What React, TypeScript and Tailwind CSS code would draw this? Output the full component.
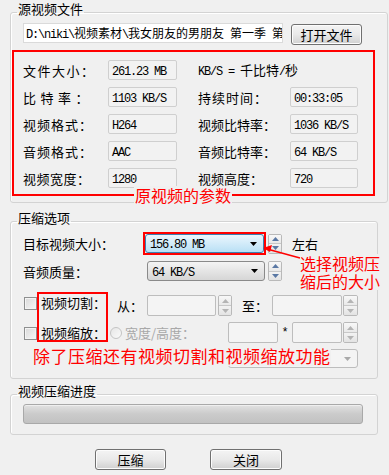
import React from "react";

// Win7-style "video compress" dialog with red hand-drawn annotations on top.

const CJK_RE = /[\u3000-\u9fff\uff00-\uffef]/;

// SimSun look: latin half width, CJK full width
function Mixed({ text, cjk = "text-[12px]" }: { text: string; cjk?: string }) {
  const parts = text.match(/[\u3000-\u9fff\uff00-\uffef]+|[^\u3000-\u9fff\uff00-\uffef]+/g) ?? [];
  return (
    <span className="whitespace-pre">
      {parts.map((p, i) =>
        CJK_RE.test(p) ? (
          <span key={i} className={"font-['Noto_Sans_CJK_SC',sans-serif] " + cjk}>
            {p}
          </span>
        ) : (
          <span key={i} className="font-['Liberation_Mono',monospace] text-[12px] tracking-[-1.2px]">
            {p}
          </span>
        )
      )}
    </span>
  );
}

function Group({
  title,
  className,
  children,
}: {
  title: string;
  className?: string;
  children?: React.ReactNode;
}) {
  return (
    <fieldset
      className={
        "w-[368px] border border-[#d3d3d3] rounded-[3px] px-[12px] shadow-[inset_1px_1px_0_#fff] " +
        (className ?? "")
      }
    >
      <legend className="-ml-[6px] px-[1px] h-[20px] pb-[6px] leading-[14px] text-[13px]">{title}</legend>
      {children}
    </fieldset>
  );
}

function ValueBox({ value }: { value: string }) {
  return (
    <div className="h-[20px] border border-[#cfcfcf] rounded-[2px] bg-[#f2f2f2] pl-[3px] flex items-center overflow-hidden">
      <Mixed text={value} />
    </div>
  );
}

function Tri({ up, color }: { up?: boolean; color: string }) {
  return (
    <svg width="7" height="4" viewBox="0 0 7 4">
      <path d={up ? "M0 4 L3.5 0 L7 4Z" : "M0 0 L7 0 L3.5 4Z"} fill={color} />
    </svg>
  );
}

function Spinner({ className, disabled }: { className?: string; disabled?: boolean }) {
  const c = disabled ? "#b4b4b4" : "#5a78a4";
  return (
    <div
      className={
        "flex flex-col border border-[#b9b9b9] rounded-[2px] overflow-hidden " + (className ?? "")
      }
    >
      <div className="flex-1 flex items-center justify-center bg-linear-to-b from-[#f8f8f8] to-[#e9e9e9] border-b border-[#c8c8c8]">
        <Tri up color={c} />
      </div>
      <div className="flex-1 flex items-center justify-center bg-linear-to-b from-[#f3f3f3] to-[#e3e3e3]">
        <Tri color={c} />
      </div>
    </div>
  );
}

function Combo({ value, blue }: { value: string; blue?: boolean }) {
  return (
    <div
      className={
        "w-full h-full rounded-[3px] border flex items-center pl-[4px] pr-[6px] " +
        (blue
          ? "border-[#3c7fb1] bg-linear-to-b from-[#ebf6fd] to-[#b9e0f5]"
          : "border-[#8a8a8a] bg-linear-to-b from-[#f4f4f4] to-[#d6d6d6]")
      }
    >
      <span className="flex-1">
        <Mixed text={value} />
      </span>
      <Tri color="#000" />
    </div>
  );
}

function Field({ className }: { className?: string }) {
  return (
    <div className={"h-[21px] border border-[#bdbdbd] rounded-[2px] bg-[#f4f4f4] " + (className ?? "")} />
  );
}

function Check() {
  return (
    <div className="w-[13px] h-[13px] border border-[#8e8f8f] bg-linear-to-br from-[#d9d9d9] to-[#f7f7f7] shadow-[inset_0_0_0_1px_#f4f4f4]" />
  );
}

function Button({ label, className }: { label: string; className?: string }) {
  return (
    <div
      className={
        "h-[21px] border border-[#707070] rounded-[3px] bg-linear-to-b from-[#f4f4f4] via-[#e9e9e9] to-[#d0d0d0] shadow-[inset_0_0_0_1px_#fcfcfc] flex items-center justify-center text-[13px] " +
        (className ?? "")
      }
    >
      {label}
    </div>
  );
}

const params: [React.ReactNode, string, React.ReactNode, string][] = [
  [<span className="tracking-[1.5px]">文件大小：</span>, "261.23 MB", <Mixed text="KB/S = 千比特/秒" cjk="text-[13px]" />, ""],
  [<span className="tracking-[4.5px]">比特率：</span>, "1103 KB/S", <span className="tracking-[1px]">持续时间：</span>, "00:33:05"],
  [<span className="tracking-[1px]">视频格式：</span>, "H264", "视频比特率：", "1036 KB/S"],
  [<span className="tracking-[1px]">音频格式：</span>, "AAC", "音频比特率：", "64 KB/S"],
  [<span className="tracking-[0.5px]">视频宽度：</span>, "1280", "视频高度：", "720"],
];

export default function App() {
  return (
    <div className="relative w-[389px] h-[475px] overflow-hidden bg-[#f0f0f0] text-black text-[13px] leading-none font-['Noto_Sans_CJK_SC','Noto_Sans',sans-serif]">
      <div className="flex flex-col px-[10px] pt-[2px]">
        <Group title="源视频文件" className="h-[201px] pt-[1px]">
          <div className="flex items-start gap-[8px]">
            <div className="w-[260px] h-[20px] border border-[#dadada] bg-white pl-[2px] flex items-center overflow-hidden">
              <Mixed text="D:\niki\视频素材\我女朋友的男朋友 第一季 第" />
            </div>
            <Button label="打开文件" className="w-[71px] mt-[1px]" />
          </div>
          <div className="mt-[5px] -ml-[11px] w-[363px] border-2 border-[#ff0000] pt-[8px] pb-[6px] pl-[9px] flex flex-col gap-[7px]">
            {params.map(([l1, v1, l2, v2], i) => (
              <div key={i} className="flex items-center h-[20px]">
                <div className="w-[85px] whitespace-nowrap">{l1}</div>
                <div className="w-[69px]">
                  <ValueBox value={v1} />
                </div>
                <div className="w-[21px]" />
                <div className="w-[92px] whitespace-nowrap">{l2}</div>
                {v2 && (
                  <div className="w-[68px]">
                    <ValueBox value={v2} />
                  </div>
                )}
              </div>
            ))}
          </div>
        </Group>

        <Group title="压缩选项" className="mt-[8px] h-[168px] pt-[1px]">
          <div className="flex items-center h-[23px]">
            <div className="w-[120px]">目标视频大小：</div>
            <div className="w-[123px] h-[23px] border-2 border-[#ff0000]">
              <Combo value="156.80 MB" blue />
            </div>
            <Spinner className="ml-[2px] w-[14px] h-[20px]" />
            <div className="ml-[10px]">左右</div>
          </div>
          <div className="flex items-center h-[20px] mt-[6px]">
            <div className="w-[124px]">音频质量：</div>
            <div className="w-[118px] h-[20px]">
              <Combo value="64 KB/S" />
            </div>
            <Spinner className="ml-[3px] w-[14px] h-[20px]" />
          </div>

          <div className="flex mt-[11px]">
            <div className="ml-[1px] flex flex-col pt-[5px] gap-[17px]">
              <Check />
              <Check />
            </div>
            <div className="w-[71px] h-[50px] border-2 border-[#ff0000] pl-[2px] flex flex-col justify-center gap-[17px] whitespace-nowrap">
              <div>视频切割：</div>
              <div>视频缩放：</div>
            </div>
            <div className="flex flex-col">
              <div className="flex items-center h-[21px] mt-[3px]">
                <div className="ml-[9px] w-[30px]">从：</div>
                <Field className="w-[69px]" />
                <Spinner disabled className="ml-[2px] w-[14px] h-[21px]" />
                <div className="ml-[10px] w-[30px]">至：</div>
                <Field className="w-[70px]" />
                <Spinner disabled className="ml-[1px] w-[15px] h-[21px]" />
              </div>
              <div className="flex items-center h-[21px] mt-[6px]">
                <div className="ml-[2px] w-[12px] h-[12px] rounded-full border border-[#c4c4c4] bg-linear-to-br from-[#e6e6e6] to-[#fafafa]" />
                <div className="ml-[3px] w-[103px] text-[#a8a8a8] whitespace-nowrap">宽度/高度：</div>
                <Field className="w-[50px]" />
                <div className="w-[14px] text-center font-['Liberation_Mono',monospace] text-[12px]">*</div>
                <Field className="w-[50px]" />
                <Spinner disabled className="ml-[1px] w-[15px] h-[21px]" />
              </div>
            </div>
          </div>
          <div className="mt-[6px] ml-[205px] w-[130px] h-[19px] border border-[#bdbdbd] rounded-[3px] bg-[#f4f4f4] flex items-center justify-end pr-[6px]">
            <Tri color="#a9a9a9" />
          </div>
        </Group>

        <Group title="视频压缩进度" className="mt-[5px] h-[51px]">
          <div className="w-[340px] h-[20px] border border-[#a9a9a9] rounded-[3px] bg-linear-to-b from-[#e2e2e2] via-[#cbcbcb] to-[#c2c2c2] shadow-[inset_0_1px_0_#efefef]" />
        </Group>

        <div className="flex mt-[14px] ml-[85px] gap-[44px]">
          <Button label="压缩" className="w-[71px]" />
          <Button label="关闭" className="w-[72px]" />
        </div>
      </div>

      {/* red annotations drawn over the dialog */}
      <div className="absolute left-[134px] top-[186px] px-[1px] bg-[#f0f0f0] text-[16px] leading-[18px] text-[#ff0000]">
        原视频的参数
      </div>
      <svg className="absolute left-[258px] top-[240px]" width="46" height="22" viewBox="0 0 46 22">
        <line x1="9" y1="9" x2="42" y2="18" stroke="#ff0000" strokeWidth="1.5" />
        <path d="M5 8 L14 5 L12 12Z" fill="#ff0000" />
      </svg>
      <div className="absolute left-[300px] top-[254px] bg-[#f0f0f0] text-[16px] leading-[18px] text-[#ff0000]">
        选择视频压
        <br />
        缩后的大小
      </div>
      <div className="absolute left-[33px] top-[346px] bg-[#f0f0f0] text-[17px] leading-[20px] tracking-[0.5px] text-[#ff0000] whitespace-nowrap">
        除了压缩还有视频切割和视频缩放功能
      </div>
    </div>
  );
}
